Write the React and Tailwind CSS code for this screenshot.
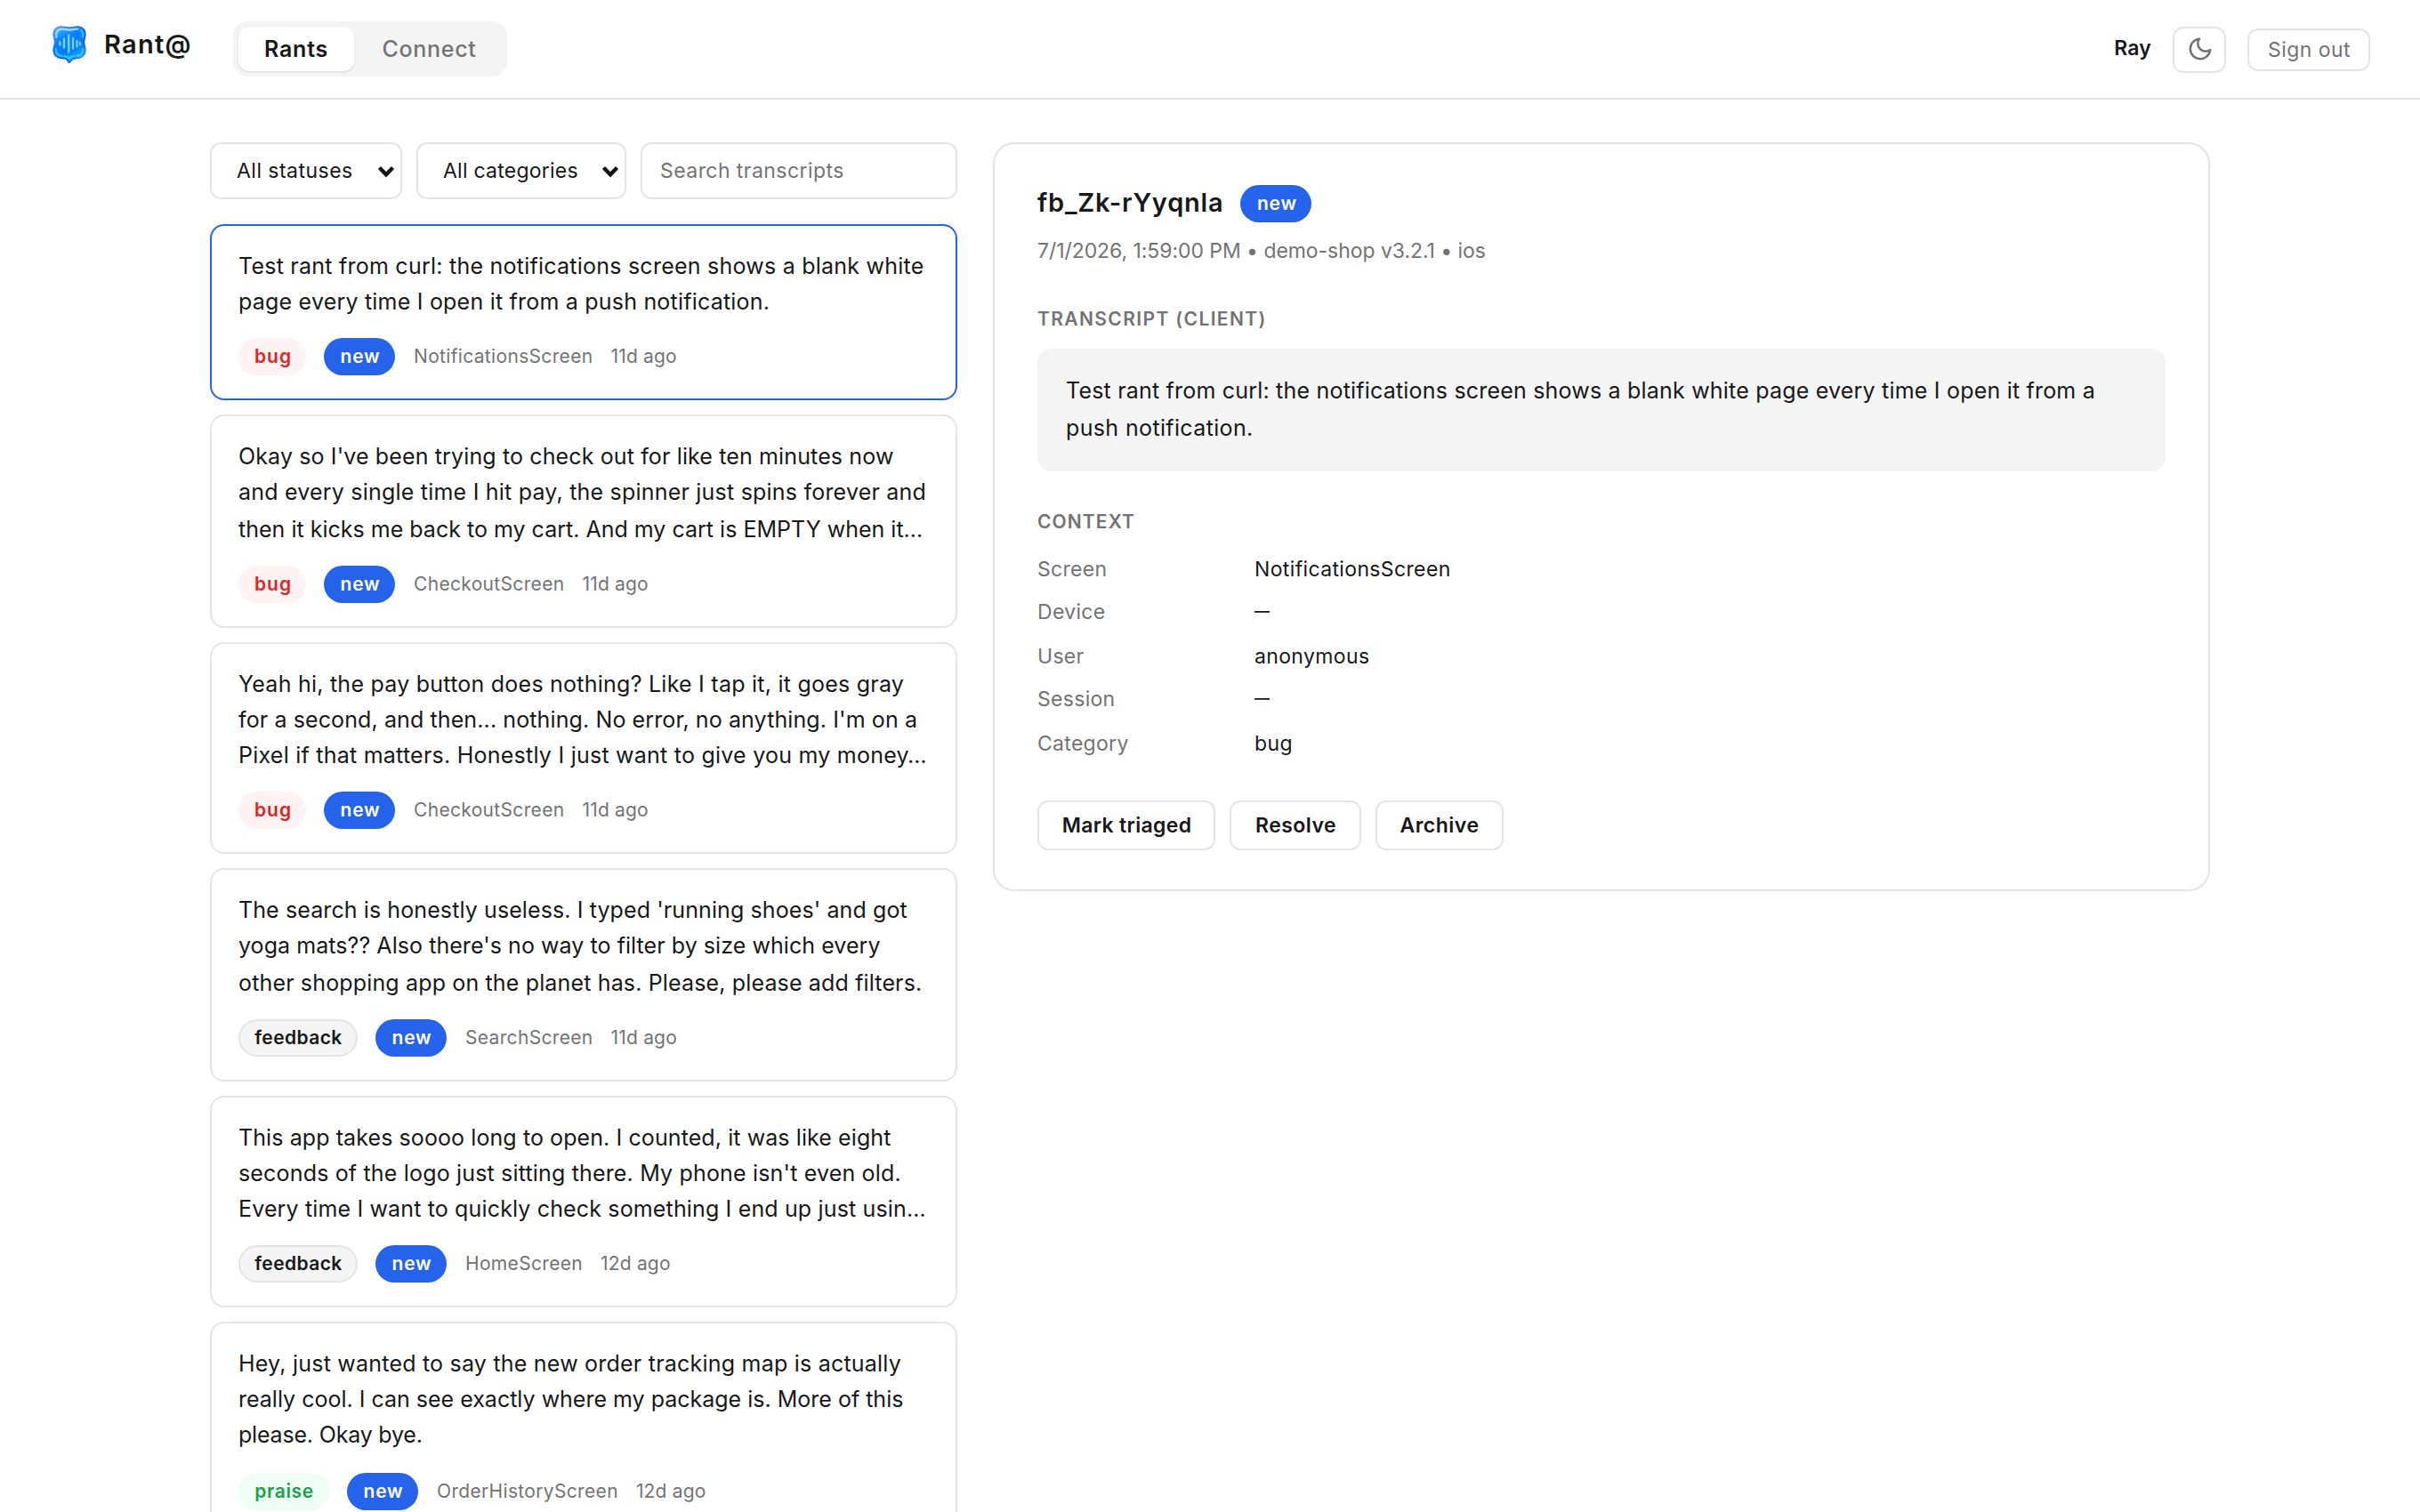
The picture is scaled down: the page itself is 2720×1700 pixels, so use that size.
import { clsx } from "clsx"

const rants = [
  {
    lines: [
      ["Test rant from curl: the notifications screen shows a blank white", "tracking-[0.24px]"],
      ["page every time I open it from a push notification.", "tracking-[0.21px]"],
    ],
    category: "bug",
    screen: "NotificationsScreen",
    age: "11d ago",
    size: "h-[198px]",
    selected: true,
  },
  {
    lines: [
      ["Okay so I've been trying to check out for like ten minutes now", "tracking-[0.13px]"],
      ["and every single time I hit pay, the spinner just spins forever and", "tracking-[0.21px]"],
      ["then it kicks me back to my cart. And my cart is EMPTY when it…", "tracking-[0.01px] pt-[2px]"],
    ],
    category: "bug",
    screen: "CheckoutScreen",
    age: "11d ago",
    size: "h-[240px]",
  },
  {
    lines: [
      ["Yeah hi, the pay button does nothing? Like I tap it, it goes gray", "tracking-[0.24px]"],
      ["for a second, and then... nothing. No error, no anything. I'm on a", "tracking-[0.11px]"],
      ["Pixel if that matters. Honestly I just want to give you my money…", "tracking-[0.24px]"],
    ],
    category: "bug",
    screen: "CheckoutScreen",
    age: "11d ago",
    size: "h-[238px]",
  },
  {
    lines: [
      ["The search is honestly useless. I typed 'running shoes' and got", "tracking-[0.1px]"],
      ["yoga mats?? Also there's no way to filter by size which every", "tracking-[0.06px]"],
      ["other shopping app on the planet has. Please, please add filters.", "tracking-[0.15px] pt-[2px]"],
    ],
    category: "feedback",
    screen: "SearchScreen",
    age: "11d ago",
    size: "h-[240px]",
  },
  {
    lines: [
      ["This app takes soooo long to open. I counted, it was like eight", "tracking-[0.09px]"],
      ["seconds of the logo just sitting there. My phone isn't even old.", "tracking-[0.17px]"],
      ["Every time I want to quickly check something I end up just usin…", "tracking-[0.15px]"],
    ],
    category: "feedback",
    screen: "HomeScreen",
    age: "12d ago",
    size: "h-[238px]",
  },
  {
    lines: [
      ["Hey, just wanted to say the new order tracking map is actually", "tracking-[0.22px]"],
      ["really cool. I can see exactly where my package is. More of this", "tracking-[0px]"],
      ["please. Okay bye.", "tracking-[-0.19px]"],
    ],
    category: "praise",
    screen: "OrderHistoryScreen",
    age: "12d ago",
    size: "h-[240px]",
  },
]

const context = [
  ["Screen", "NotificationsScreen"],
  ["Device", null],
  ["User", "anonymous"],
  ["Session", null],
  ["Category", "bug"],
]

const badgeStyles = {
  bug: "w-[76px] bg-[#fef2f2] pl-[2px] text-[#e02424] tracking-[1px]",
  feedback: "w-[134px] border-2 border-[#e4e4e5] bg-[#f4f4f4] pl-px text-[#18181a] tracking-[0.4px]",
  praise: "w-[102px] bg-[#f0fdf4] pl-px text-[#16a34a] tracking-[0.6px]",
  new: "w-[80px] bg-[#2563eb] pl-[2px] text-white tracking-[0.8px]",
}

const Badge = ({ kind }) => (
  <span
    className={clsx(
      "flex h-[42px] shrink-0 items-center justify-center rounded-full pb-px text-[21px] font-semibold",
      badgeStyles[kind]
    )}
  >
    {kind}
  </span>
)

const Logo = () => (
  <svg className="h-[42px] w-[38px] shrink-0" viewBox="0 0 38 42" fill="none">
    <defs>
      <linearGradient id="bubble" x1="6" y1="0" x2="26" y2="42" gradientUnits="userSpaceOnUse">
        <stop offset="0" stopColor="#4cc3ff" />
        <stop offset="0.3" stopColor="#0c84ff" />
        <stop offset="0.65" stopColor="#0a78ff" />
        <stop offset="1" stopColor="#12c0fb" />
      </linearGradient>
      <linearGradient id="rim" x1="0" y1="0" x2="38" y2="38" gradientUnits="userSpaceOnUse">
        <stop offset="0" stopColor="#8a8cff" />
        <stop offset="0.35" stopColor="#2f6bff" />
        <stop offset="0.7" stopColor="#0a4df0" />
        <stop offset="1" stopColor="#5b7dff" />
      </linearGradient>
    </defs>
    <path
      d="M9 1C13.5 0.6 15 2 19 2s5.500-1.400 10-1c5.500 0.400 8.600 4.500 7.900 9.500C36.500 13.500 35.500 15.500 35.500 18.500c0 3 1.700 5.500 1.500 9.500-0.300 5-4 8.300-9 8.500-3.500 0.200-5.500 0.500-6.800 2.500-1 1.500-1.500 2.600-2.700 2.500-1.300-0.200-1-2-2-3.500C15.500 36.800 13.500 36.700 10 36.500 5 36.200 1.300 33 1 28c-0.200-4 1.500-6.500 1.500-9.500 0-3-1-5-1.400-8C0.400 5.500 3.500 1.400 9 1Z"
      fill="url(#bubble)"
      stroke="url(#rim)"
      strokeWidth="1.400"
    />
    <path
      d="M4.500 13C3.300 7.500 5.500 4 10 3.600c4-0.300 5.500 1 9 1s5-1.200 9-1"
      stroke="#a5ecff"
      strokeWidth="2.200"
      strokeLinecap="round"
      opacity="0.85"
    />
    <path
      d="M34 13c0.700-3.500 0-6.500-2.200-8.200M4 26c-0.200 5 2.500 7.600 6.500 8M34.200 26c0 5-2.700 7.700-7 8M13 34.300c2.500 0.200 4.500 0.700 6 2.200 1.500-1.500 3-2 5-2.200"
      stroke="#35dcff"
      strokeWidth="2"
      strokeLinecap="round"
      opacity="0.8"
    />
    <path
      d="M8.500 18.500v3M13 14.500v10M18.200 10.500v19M23 14v11.500M27.500 17v6.500M31 18.800v2.500"
      stroke="#74d3ff"
      strokeWidth="2.300"
      strokeLinecap="round"
    />
  </svg>
)

const Moon = () => (
  <svg
    className="mb-[2px] ml-px size-[30px]"
    viewBox="0 0 24 24"
    fill="none"
    stroke="currentColor"
    strokeWidth="2"
    strokeLinecap="round"
    strokeLinejoin="round"
  >
    <path d="M21 12.790A9 9 0 1 1 11.210 3 7 7 0 0 0 21 12.790z" />
  </svg>
)

const Select = ({ label, className }) => (
  <button
    className={clsx(
      "flex h-16 items-center justify-between rounded-xl border-2 border-[#e4e4e5] pr-[6px] pl-7 text-[23px]",
      className
    )}
  >
    {label}
    <svg className="mt-[2px] h-[14px] w-5" viewBox="0 0 20 14" fill="none">
      <path d="M2.500 2.500 10 10.300 17.500 2.500" stroke="#111" strokeWidth="4.300" />
    </svg>
  </button>
)

const Header = () => (
  <header className="flex h-[112px] items-center border-b-2 border-[#e4e4e5] pr-14 pl-[59px]">
    <div className="flex w-[203px] shrink-0 items-center gap-5 pb-[10px]">
      <Logo />
      <span className="pb-px text-[29px] font-semibold tracking-[1.3px]">Rant@</span>
    </div>
    <nav className="flex gap-[2px] rounded-2xl bg-[#f4f4f4] p-[6px] text-[25px]">
      <span className="flex h-[50px] w-[130px] items-center justify-center rounded-xl bg-white pt-px font-semibold tracking-[0.8px] shadow-sm">
        Rants
      </span>
      <span className="flex h-[50px] w-[164px] items-center justify-center pt-px pl-px font-medium tracking-[0.7px] text-[#737375]">
        Connect
      </span>
    </nav>
    <div className="ml-auto flex items-center gap-6 pt-[2px] text-[23px]">
      <span className="pb-1 font-semibold tracking-[0.2px]">Ray</span>
      <button className="flex h-[52px] w-[60px] items-center justify-center rounded-xl border-2 border-[#e4e4e5] text-[#737375]">
        <Moon />
      </button>
      <button className="h-12 w-[138px] rounded-xl border-2 border-[#e4e4e5] pl-px tracking-[0.45px] text-[#737375]">
        Sign out
      </button>
    </div>
  </header>
)

const RantCard = ({ rant }) => (
  <article
    className={clsx(
      "flex shrink-0 flex-col justify-between rounded-2xl border-2 px-[30px] pt-[25px] pb-[26px]",
      rant.size,
      rant.selected ? "border-[#2563eb]" : "border-[#e4e4e5]"
    )}
  >
    <div className="text-[25px] leading-[40px] whitespace-nowrap">
      {rant.lines.map(([text, style]) => (
        <p key={text} className={style}>
          {text}
        </p>
      ))}
    </div>
    <div className="flex items-center gap-5 text-[21px] text-[#737375]">
      <Badge kind={rant.category} />
      <Badge kind="new" />
      <span className="pb-px pl-px tracking-[0.33px]">{rant.screen}</span>
      <span className="pb-px tracking-[0.18px]">{rant.age}</span>
    </div>
  </article>
)

const Detail = () => (
  <section className="flex h-[842px] flex-1 flex-col rounded-3xl border-2 border-[#e4e4e5] px-12 pt-[46px]">
    <div className="flex h-[42px] items-center gap-[19px]">
      <h2 className="pb-[3px] text-[29px] font-semibold tracking-[0.79px]">fb_Zk-rYyqnla</h2>
      <Badge kind="new" />
    </div>
    <p className="mt-[18px] text-[23px] leading-[28px] tracking-[-0.06px] text-[#737375]">
      7/1/2026, 1:59:00 PM • demo-shop v3.2.1 • ios
    </p>

    <h3 className="mt-[50px] text-[21px] leading-[26px] font-semibold tracking-[1.38px] text-[#737375]">
      TRANSCRIPT (CLIENT)
    </h3>
    <div className="mt-5 h-[138px] rounded-2xl bg-[#f4f4f4] px-8 pt-[26px] text-[25px] leading-[42px] whitespace-nowrap">
      <p className="tracking-[0.2px]">
        Test rant from curl: the notifications screen shows a blank white page every time I open it from a
      </p>
      <p className="tracking-[0.36px]">push notification.</p>
    </div>

    <h3 className="mt-[44px] text-[21px] leading-[26px] font-semibold tracking-[1.1px] text-[#737375]">
      CONTEXT
    </h3>
    <dl className="mt-4 text-[23px] leading-[48px]">
      {context.map(([label, value]) => (
        <div key={label} className="flex even:pb-[2px]">
          <dt className="w-[244px] tracking-[0.3px] text-[#737375]">{label}</dt>
          {value ? (
            <dd className="tracking-[0.36px]">{value}</dd>
          ) : (
            <dd className="-mt-px h-[48px] text-[17px] font-semibold">—</dd>
          )}
        </div>
      ))}
    </dl>

    <div className="mt-10 flex gap-4 text-[23px] font-semibold">
      <button className="h-14 w-[200px] rounded-xl border-2 border-[#e4e4e5] pl-px tracking-[0.32px]">
        Mark triaged
      </button>
      <button className="h-14 w-[148px] rounded-xl border-2 border-[#e4e4e5] pl-px tracking-[0.46px]">
        Resolve
      </button>
      <button className="h-14 w-[144px] rounded-xl border-2 border-[#e4e4e5] tracking-[0.5px]">
        Archive
      </button>
    </div>
  </section>
)

export default function App() {
  return (
    <div className="h-[1700px] overflow-hidden bg-white font-[Inter,sans-serif] text-[#18181a]">
      <Header />
      <main className="mx-auto flex w-[2248px] items-start gap-10 pt-12">
        <div className="w-[840px] shrink-0">
          <div className="mb-7 flex gap-4">
            <Select label="All statuses" className="w-[216px] tracking-[0.47px]" />
            <Select label="All categories" className="w-[236px] tracking-[0.24px]" />
            <input
              className="h-16 min-w-0 flex-1 rounded-xl border-2 border-[#e4e4e5] px-5 text-[23px] tracking-[0.44px] placeholder:text-[#737375]"
              placeholder="Search transcripts"
            />
          </div>
          <div className="flex flex-col gap-4">
            {rants.map((rant) => (
              <RantCard key={rant.lines[0][0]} rant={rant} />
            ))}
          </div>
        </div>
        <Detail />
      </main>
    </div>
  )
}
